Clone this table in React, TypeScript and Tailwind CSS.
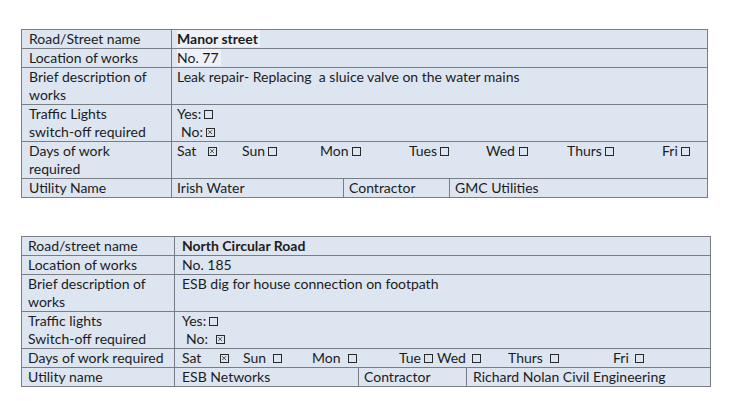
import React from 'react';

type Day = { label: string; lw: number; w: number; checked?: boolean };

const Box = ({ checked }: { checked?: boolean }) => (
  <span className="inline-block w-[9px] h-[9px] border border-[#2a2a2a] relative shrink-0">
    {checked && (
      <svg viewBox="0 0 9 9" className="absolute inset-0 w-full h-full">
        <path d="M1.5 1.5 L6.5 6.5 M6.5 1.5 L1.5 6.5" stroke="#2a2a2a" strokeWidth="1" fill="none" />
      </svg>
    )}
  </span>
);

const Days = ({ days }: { days: Day[] }) => (
  <div className="flex items-baseline whitespace-nowrap">
    {days.map((d, i) => (
      <span key={i} className="inline-flex items-baseline shrink-0" style={{ width: d.w || undefined }}>
        <span className="inline-block shrink-0 mr-[3px]" style={{ minWidth: d.lw }}>{d.label}</span>
        <Box checked={d.checked} />
      </span>
    ))}
  </div>
);

const days1: Day[] = [
  { label: 'Sat', lw: 28, w: 65, checked: true },
  { label: 'Sun', lw: 23, w: 78 },
  { label: 'Mon', lw: 27, w: 89 },
  { label: 'Tues', lw: 25, w: 77 },
  { label: 'Wed', lw: 30, w: 81 },
  { label: 'Thurs', lw: 35, w: 95 },
  { label: 'Fri', lw: 10, w: 0 },
];

const days2: Day[] = [
  { label: 'Sat', lw: 35, w: 61, checked: true },
  { label: 'Sun', lw: 27, w: 69 },
  { label: 'Mon', lw: 33, w: 87 },
  { label: 'Tue', lw: 18, w: 38 },
  { label: 'Wed', lw: 32, w: 71 },
  { label: 'Thurs', lw: 39, w: 105 },
  { label: 'Fri', lw: 19, w: 0 },
];

const td = 'border border-[#7a7d83] align-top p-0 leading-[18px]';

export default function App() {
  return (
    <div className="w-[735px] h-[401px] bg-white text-[#1c1c1c] text-[14px] font-['Lato','Open_Sans',sans-serif] pt-[29px] pl-[21px]">
      {/* first works notice */}
      <table className="border-collapse table-fixed w-[687px] bg-[#dde5f1]">
        <colgroup>
          <col className="w-[150px]" />
          <col className="w-[172px]" />
          <col className="w-[106px]" />
          <col />
        </colgroup>
        <tbody>
          <tr>
            <td className={`${td} pl-[7px]`}>Road/Street name</td>
            <td className={`${td} pl-[5px]`} colSpan={3}>
              <span className="font-bold bg-[#eef2f8] pr-[2px]">Manor street</span>
            </td>
          </tr>
          <tr>
            <td className={`${td} pl-[7px]`}>Location of works</td>
            <td className={`${td} pl-[5px]`} colSpan={3}>
              <span className="bg-[#eef2f8] pr-[2px]">No. 77</span>
            </td>
          </tr>
          <tr>
            <td className={`${td} pl-[7px]`}>Brief description of<br />works</td>
            <td className={`${td} pl-[5px]`} colSpan={3}>Leak repair- Replacing&nbsp; a sluice valve on the water mains</td>
          </tr>
          <tr>
            <td className={`${td} pl-[7px]`}>Traffic Lights<br />switch-off required</td>
            <td className={`${td} pl-[5px]`} colSpan={3}>
              <div className="flex items-baseline gap-[3px]">Yes: <Box /></div>
              <div className="flex items-baseline gap-[3px] pl-[4px]">No: <Box checked /></div>
            </td>
          </tr>
          <tr>
            <td className={`${td} pl-[7px]`}>Days of work<br />required</td>
            <td className={`${td} pl-[5px]`} colSpan={3}>
              <Days days={days1} />
            </td>
          </tr>
          <tr>
            <td className={`${td} pl-[7px]`}>Utility Name</td>
            <td className={`${td} pl-[5px]`}>Irish Water</td>
            <td className={`${td} pl-[5px]`}>Contractor</td>
            <td className={`${td} pl-[5px]`}>GMC Utilities</td>
          </tr>
        </tbody>
      </table>

      {/* second works notice */}
      <table className="border-collapse table-fixed w-[690px] bg-[#dde5f1] mt-[38px]">
        <colgroup>
          <col className="w-[153px]" />
          <col className="w-[184px]" />
          <col className="w-[108px]" />
          <col />
        </colgroup>
        <tbody>
          <tr>
            <td className={`${td} pl-[6px]`}>Road/street name</td>
            <td className={`${td} pl-[7px] font-bold`} colSpan={3}>North Circular Road</td>
          </tr>
          <tr>
            <td className={`${td} pl-[6px]`}>Location of works</td>
            <td className={`${td} pl-[7px]`} colSpan={3}>No. 185</td>
          </tr>
          <tr>
            <td className={`${td} pl-[6px]`}>Brief description of<br />works</td>
            <td className={`${td} pl-[7px]`} colSpan={3}>ESB dig for house connection on footpath</td>
          </tr>
          <tr>
            <td className={`${td} pl-[6px]`}>Traffic lights<br />Switch-off required</td>
            <td className={`${td} pl-[7px]`} colSpan={3}>
              <div className="flex items-baseline gap-[3px]">Yes: <Box /></div>
              <div className="flex items-baseline gap-[8px] pl-[4px]">No: <Box checked /></div>
            </td>
          </tr>
          <tr>
            <td className={`${td} pl-[6px] whitespace-nowrap`}>Days of work required</td>
            <td className={`${td} pl-[7px]`} colSpan={3}>
              <Days days={days2} />
            </td>
          </tr>
          <tr>
            <td className={`${td} pl-[6px]`}>Utility name</td>
            <td className={`${td} pl-[7px]`}>ESB Networks</td>
            <td className={`${td} pl-[5px]`}>Contractor</td>
            <td className={`${td} pl-[6px]`}>Richard Nolan Civil Engineering</td>
          </tr>
        </tbody>
      </table>
    </div>
  );
}
